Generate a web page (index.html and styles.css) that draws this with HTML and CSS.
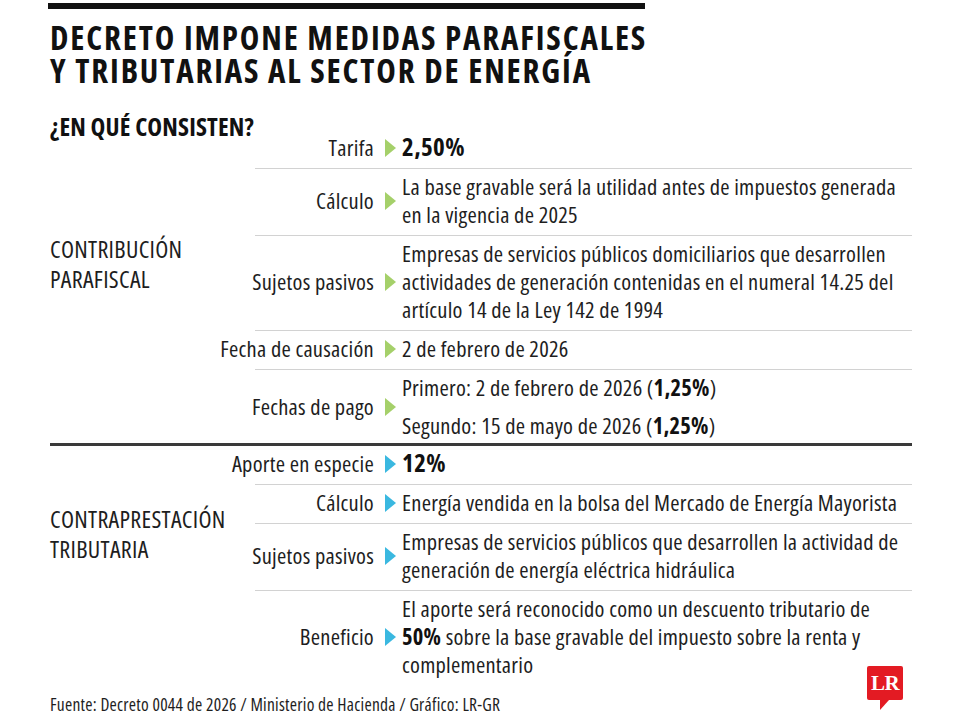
FILE: index.html
```html
<!DOCTYPE html>
<html lang="es">
<head>
<meta charset="utf-8">
<link rel="stylesheet" href="styles.css">
</head>
<body>
<div class="page">
  <div class="topbar"></div>
  <h1 class="title">DECRETO IMPONE MEDIDAS PARAFISCALES<br>Y TRIBUTARIAS AL SECTOR DE ENERGÍA</h1>

  <section class="section first">
    <div class="side">
      <h2 class="question">¿EN QUÉ CONSISTEN?</h2>
      <div class="group g1">CONTRIBUCIÓN<br>PARAFISCAL</div>
    </div>
    <div class="rows">
      <div class="row">
        <div class="label">Tarifa</div>
        <div class="arrow green"></div>
        <div class="value"><b class="big">2,50%</b></div>
      </div>
      <div class="row">
        <div class="label">Cálculo</div>
        <div class="arrow green"></div>
        <div class="value">La base gravable será la utilidad antes de impuestos generada<br>en la vigencia de 2025</div>
      </div>
      <div class="row">
        <div class="label">Sujetos pasivos</div>
        <div class="arrow green"></div>
        <div class="value">Empresas de servicios públicos domiciliarios que desarrollen<br>actividades de generación contenidas en el numeral 14.25 del<br>artículo 14 de la Ley 142 de 1994</div>
      </div>
      <div class="row">
        <div class="label">Fecha de causación</div>
        <div class="arrow green"></div>
        <div class="value">2 de febrero de 2026</div>
      </div>
      <div class="row row-pago">
        <div class="label">Fechas de pago</div>
        <div class="arrow green"></div>
        <div class="value pago">
          <div>Primero: 2 de febrero de 2026 (<b>1,25%</b>)</div>
          <div>Segundo: 15 de mayo de 2026 (<b>1,25%</b>)</div>
        </div>
      </div>
    </div>
  </section>

  <section class="section second">
    <div class="side">
      <div class="group g2">CONTRAPRESTACIÓN<br>TRIBUTARIA</div>
    </div>
    <div class="rows">
      <div class="row">
        <div class="label">Aporte en especie</div>
        <div class="arrow blue"></div>
        <div class="value"><b class="big">12%</b></div>
      </div>
      <div class="row">
        <div class="label">Cálculo</div>
        <div class="arrow blue"></div>
        <div class="value">Energía vendida en la bolsa del Mercado de Energía Mayorista</div>
      </div>
      <div class="row">
        <div class="label">Sujetos pasivos</div>
        <div class="arrow blue"></div>
        <div class="value">Empresas de servicios públicos que desarrollen la actividad de<br>generación de energía eléctrica hidráulica</div>
      </div>
      <div class="row">
        <div class="label">Beneficio</div>
        <div class="arrow blue"></div>
        <div class="value">El aporte será reconocido como un descuento tributario de<br><b>50%</b> sobre la base gravable del impuesto sobre la renta y<br>complementario</div>
      </div>
    </div>
  </section>

  <footer class="footer">
    <div class="source">Fuente: Decreto 0044 de 2026 / Ministerio de Hacienda / Gráfico: LR-GR</div>
    <div class="logo"><span>LR</span></div>
  </footer>
</div>
</body>
</html>
```
FILE: styles.css
```css
* { box-sizing: border-box; }
html, body { margin: 0; padding: 0; background: #fff; }
body {
  font-family: "Open Sans", "Liberation Sans", sans-serif;
  font-stretch: 75%;
  color: #1e1e1e;
  width: 960px;
  height: 720px;
  overflow: hidden;
}
.page {
  padding: 3px 48px 0 50px;
}
.topbar {
  width: 597px;
  height: 6px;
  margin-left: -2px;
  background: #111;
}
.title {
  margin: 12px 0 0 0;
  font-size: 33px;
  line-height: 33px;
  font-weight: 700;
  font-stretch: 75%;
  letter-spacing: 1.85px;
  color: #111;
  white-space: nowrap;
}
.section {
  display: grid;
  grid-template-columns: 205px 1fr;
}
.section.first {
  margin-top: 24px;
  border-bottom: 3px solid #3a3a3a;
}
.question {
  margin: 0;
  font-size: 25px;
  line-height: 30px;
  font-weight: 700;
  letter-spacing: 0.15px;
  color: #111;
  white-space: nowrap;
}
.group {
  font-size: 24px;
  line-height: 30px;
  letter-spacing: 0.3px;
  white-space: nowrap;
}
.g1 { margin-top: 93px; }
.g2 { margin-top: 58px; }
.first .rows { padding-top: 19px; }
.row {
  display: grid;
  grid-template-columns: 119px 28px 1fr;
  align-items: center;
  border-bottom: 1px solid #d2d2d2;
  padding: 4px 0 6px;
}
.row:last-child { border-bottom: none; }
.row-pago { padding-bottom: 3px; }
.label {
  display: flex;
  justify-content: flex-end;
  font-size: 22.5px;
  line-height: 28px;
  letter-spacing: 0.25px;
  white-space: nowrap;
}
.arrow {
  width: 0;
  height: 0;
  margin-left: 11px;
  border-top: 9px solid transparent;
  border-bottom: 9px solid transparent;
  border-left: 11px solid #a5d06a;
}
.arrow.green { border-left-color: #a5d06a; }
.arrow.blue { border-left-color: #3ab8e0; }
.value {
  font-size: 22.5px;
  line-height: 28px;
  letter-spacing: 0.25px;
  white-space: nowrap;
}
.value b { font-weight: 700; color: #111; }
.value b.big { font-size: 25px; line-height: 20px; letter-spacing: 0.4px; }
.pago { display: flex; flex-direction: column; gap: 10px; }
.footer {
  display: flex;
  justify-content: space-between;
  align-items: flex-start;
  padding-right: 9px;
  margin-top: -19px;
}
.source {
  margin-top: 28px;
  font-size: 17.5px;
  line-height: 20px;
  letter-spacing: 0.25px;
}
.logo {
  position: relative;
  width: 36px;
  height: 34px;
  background: #e31b23;
  border-radius: 2px;
  display: flex;
  align-items: center;
  justify-content: center;
}
.logo::after {
  content: "";
  position: absolute;
  left: 13px;
  bottom: -10px;
  border-right: 9px solid transparent;
  border-top: 10px solid #e31b23;
}
.logo span {
  font-family: "Liberation Serif", serif;
  font-weight: 700;
  font-size: 21px;
  color: #fff;
  letter-spacing: -0.5px;
}
```
